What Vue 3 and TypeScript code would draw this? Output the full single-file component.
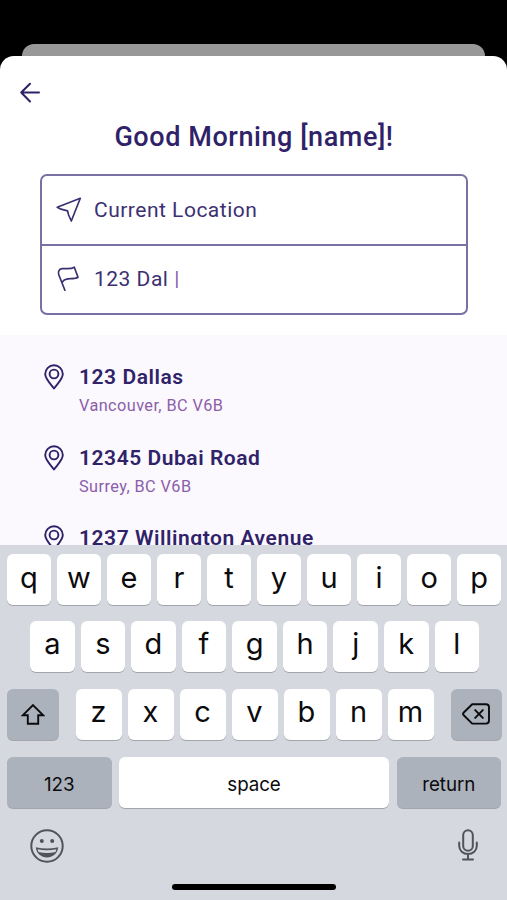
<script setup lang="ts">
interface Place {
  name: string
  area?: string
}

const places: Place[] = [
  { name: '123 Dallas', area: 'Vancouver, BC V6B' },
  { name: '12345 Dubai Road', area: 'Surrey, BC V6B' },
  { name: '1237 Willington Avenue' },
]

const topRow: string[] = 'qwertyuiop'.split('')
const middleRow: string[] = 'asdfghjkl'.split('')
const bottomRow: string[] = 'zxcvbnm'.split('')
</script>

<template>
  <div class="screen">
    <div class="behind"></div>
    <main class="sheet">
      <button class="back" aria-label="Back">
        <svg width="22" height="22" viewBox="0 0 22 22">
          <path d="M20 10.500H2.200M11 1.800L2.200 10.500l8.800 9" />
        </svg>
      </button>
      <h1 class="title">Good Morning [name]!</h1>
      <div class="route">
        <div class="field">
          <svg class="field-icon" width="28" height="28" viewBox="0 0 28 28">
            <path d="M25.300 2.300L2.200 11.200 6 13.200 12.500 14.800 13.600 19 16.300 25z" />
          </svg>
          <span>Current Location</span>
        </div>
        <div class="field">
          <svg class="field-icon" width="28" height="28" viewBox="0 0 28 28">
            <path d="M9.900 25.200L3.700 9.500C2.800 6.200 4.200 4.300 7 3.700c4-.6 8.500.9 12.300-1.500L23 12.200c-4.500 3-12.500-.5-15.400 4.600" />
          </svg>
          <span>123 Dal <i class="caret">|</i></span>
        </div>
      </div>
      <ul class="results">
        <li v-for="place in places" :key="place.name" class="place">
          <svg class="pin" width="20" height="26" viewBox="0 0 20 26">
            <path d="M10 24.500C7 20.200 1.200 15.200 1.200 10.100a8.800 8.800 0 0 1 17.600 0C18.800 15.200 13 20.200 10 24.500z" />
            <circle cx="10" cy="10" r="4.400" />
          </svg>
          <div>
            <div class="name">{{ place.name }}</div>
            <div v-if="place.area" class="area">{{ place.area }}</div>
          </div>
        </li>
      </ul>
    </main>
    <section class="keyboard">
      <div class="row">
        <button v-for="k in topRow" :key="k" class="key">{{ k }}</button>
      </div>
      <div class="row middle">
        <button v-for="k in middleRow" :key="k" class="key">{{ k }}</button>
      </div>
      <div class="row bottom">
        <button class="key dark side" aria-label="Shift">
          <svg class="sharp" width="24" height="22" viewBox="0 0 24 22">
            <path d="M12 2.100L22 12.200H17.200V20.700H6.800V12.200H2z" />
          </svg>
        </button>
        <div class="letters">
          <button v-for="k in bottomRow" :key="k" class="key">{{ k }}</button>
        </div>
        <button class="key dark side" aria-label="Delete">
          <svg width="28" height="22" viewBox="0 0 28 22">
            <path d="M10.200 1.200H24a3 3 0 0 1 3 3v13.400a3 3 0 0 1-3 3H10.200L1.500 12q-.9-1.100 0-2.200zM13.200 7.100l7.600 7.800M20.800 7.100l-7.600 7.800" />
          </svg>
        </button>
      </div>
      <div class="row actions">
        <button class="key dark word">123</button>
        <button class="key word space">space</button>
        <button class="key dark word">return</button>
      </div>
      <div class="tools">
        <svg width="34" height="34" viewBox="0 0 34 34">
          <circle class="line" cx="17" cy="17" r="15.700" />
          <ellipse class="fill" cx="11.800" cy="12" rx="2" ry="2.100" />
          <ellipse class="fill" cx="22.200" cy="12" rx="2" ry="2.100" />
          <path class="fill" d="M5.800 18.300q11.200 2.600 22.400 0C27.700 24.500 22.600 28.500 17 28.500S6.300 24.500 5.800 18.300z" />
          <path class="teeth" d="M7.600 20.300q9.400 1.700 18.800 0l-.9 2.800q-8.500 1.900-17 0z" />
        </svg>
        <svg width="20" height="34" viewBox="0 0 20 34">
          <rect class="line" x="5.200" y="1.300" width="9.600" height="20.500" rx="4.800" />
          <path class="line" d="M1.200 13.500v3.500a8.800 8 0 0 0 17.600 0v-3.500M10 25v5.500M5 30.500h10" />
        </svg>
      </div>
      <div class="home"></div>
    </section>
  </div>
</template>

<style>
body {
  margin: 0;
  background: #000;
}
</style>

<style scoped>
.screen {
  display: flex;
  flex-direction: column;
  width: 507px;
  height: 900px;
  padding-top: 44px;
  box-sizing: border-box;
  overflow: hidden;
  background: #000;
  font-family: Roboto, sans-serif;
  color: #2f2268;
}
.behind {
  flex: none;
  height: 12px;
  margin: 0 22px;
  border-radius: 12px 12px 0 0;
  background: #989898;
}
.sheet {
  flex: none;
  display: flex;
  flex-direction: column;
  height: 489px;
  overflow: hidden;
  border-radius: 14px 14px 0 0;
  background: #fff;
}
button {
  border: 0;
  padding: 0;
  margin: 0;
  background: none;
  font: inherit;
  color: inherit;
}
svg {
  display: block;
  flex: none;
  fill: none;
  stroke: currentColor;
  stroke-linejoin: round;
  stroke-linecap: round;
}
.back {
  align-self: flex-start;
  margin: 26px 0 0 19px;
  stroke-width: 2;
}
.title {
  margin: 16px 0 0;
  padding-left: 1px;
  text-align: center;
  font-size: 27px;
  line-height: 34px;
  font-weight: 500;
  letter-spacing: 0.57px;
}
.route {
  flex: none;
  display: flex;
  flex-direction: column;
  height: 141px;
  margin: 20px 39px 0 40px;
  box-sizing: border-box;
  border: 2px solid #7a70a3;
  border-radius: 7px;
}
.field {
  flex: 1;
  display: flex;
  align-items: center;
  gap: 11px;
  padding-left: 13px;
  font-size: 21px;
  letter-spacing: 0.5px;
  white-space: pre;
  color: #3c3072;
}
.field + .field {
  border-top: 2px solid #7a70a3;
}
.field-icon {
  stroke-width: 1.700;
}
.caret {
  font-style: normal;
  color: #8d5bab;
}
.results {
  flex: 1;
  margin: 20px 0 0;
  padding: 29px 0 0 44px;
  list-style: none;
  background: #fbf8fe;
}
.place {
  display: flex;
  gap: 15px;
  height: 80.500px;
}
.pin {
  stroke-width: 1.900;
}
.name {
  font-size: 21px;
  line-height: 26px;
  font-weight: 600;
  letter-spacing: 0.55px;
}
.area {
  margin-top: 6px;
  font-size: 16.300px;
  line-height: 20px;
  letter-spacing: 0.42px;
  color: #8c5ea9;
}
.keyboard {
  flex: 1;
  display: flex;
  flex-direction: column;
  padding: 9px 6px 0 7px;
  background: #d5d8df;
  font-family: Inter, sans-serif;
  color: #0b0b0d;
}
.row {
  display: flex;
  gap: 6.500px;
  height: 51px;
}
.middle {
  gap: 6px;
  margin: 15.500px 22px 0 23px;
}
.bottom {
  gap: 17px;
  margin: 17px -1px 0 0;
}
.actions {
  gap: 7.500px;
  margin-top: 17.500px;
}
.letters {
  flex: 1;
  display: flex;
  gap: 6px;
}
.key {
  flex: 1 1 0;
  min-width: 0;
  display: flex;
  align-items: center;
  justify-content: center;
  padding-bottom: 5px;
  border-radius: 6px;
  background: #fff;
  box-shadow: 0 1px 0 #a2a5ab;
  font-size: 29px;
}
.dark {
  background: #abb2bc;
}
.side {
  flex: 0 0 51.500px;
  padding: 0;
  stroke-width: 1.900;
}
.sharp {
  stroke-linejoin: miter;
}
.word {
  flex: 0 0 104.500px;
  padding: 3px 0 0;
  font-size: 18.800px;
  letter-spacing: -0.1px;
}
.space {
  flex: 1;
}
.tools {
  display: flex;
  justify-content: space-between;
  margin: 20.500px 23px 0 23px;
  color: #505359;
}
.line {
  stroke-width: 2;
}
.fill {
  fill: currentColor;
  stroke: none;
}
.teeth {
  fill: #d5d8df;
  stroke: none;
}
.home {
  width: 164px;
  height: 6px;
  margin: 21.500px 0 0 165px;
  border-radius: 3px;
  background: #000;
}
</style>
